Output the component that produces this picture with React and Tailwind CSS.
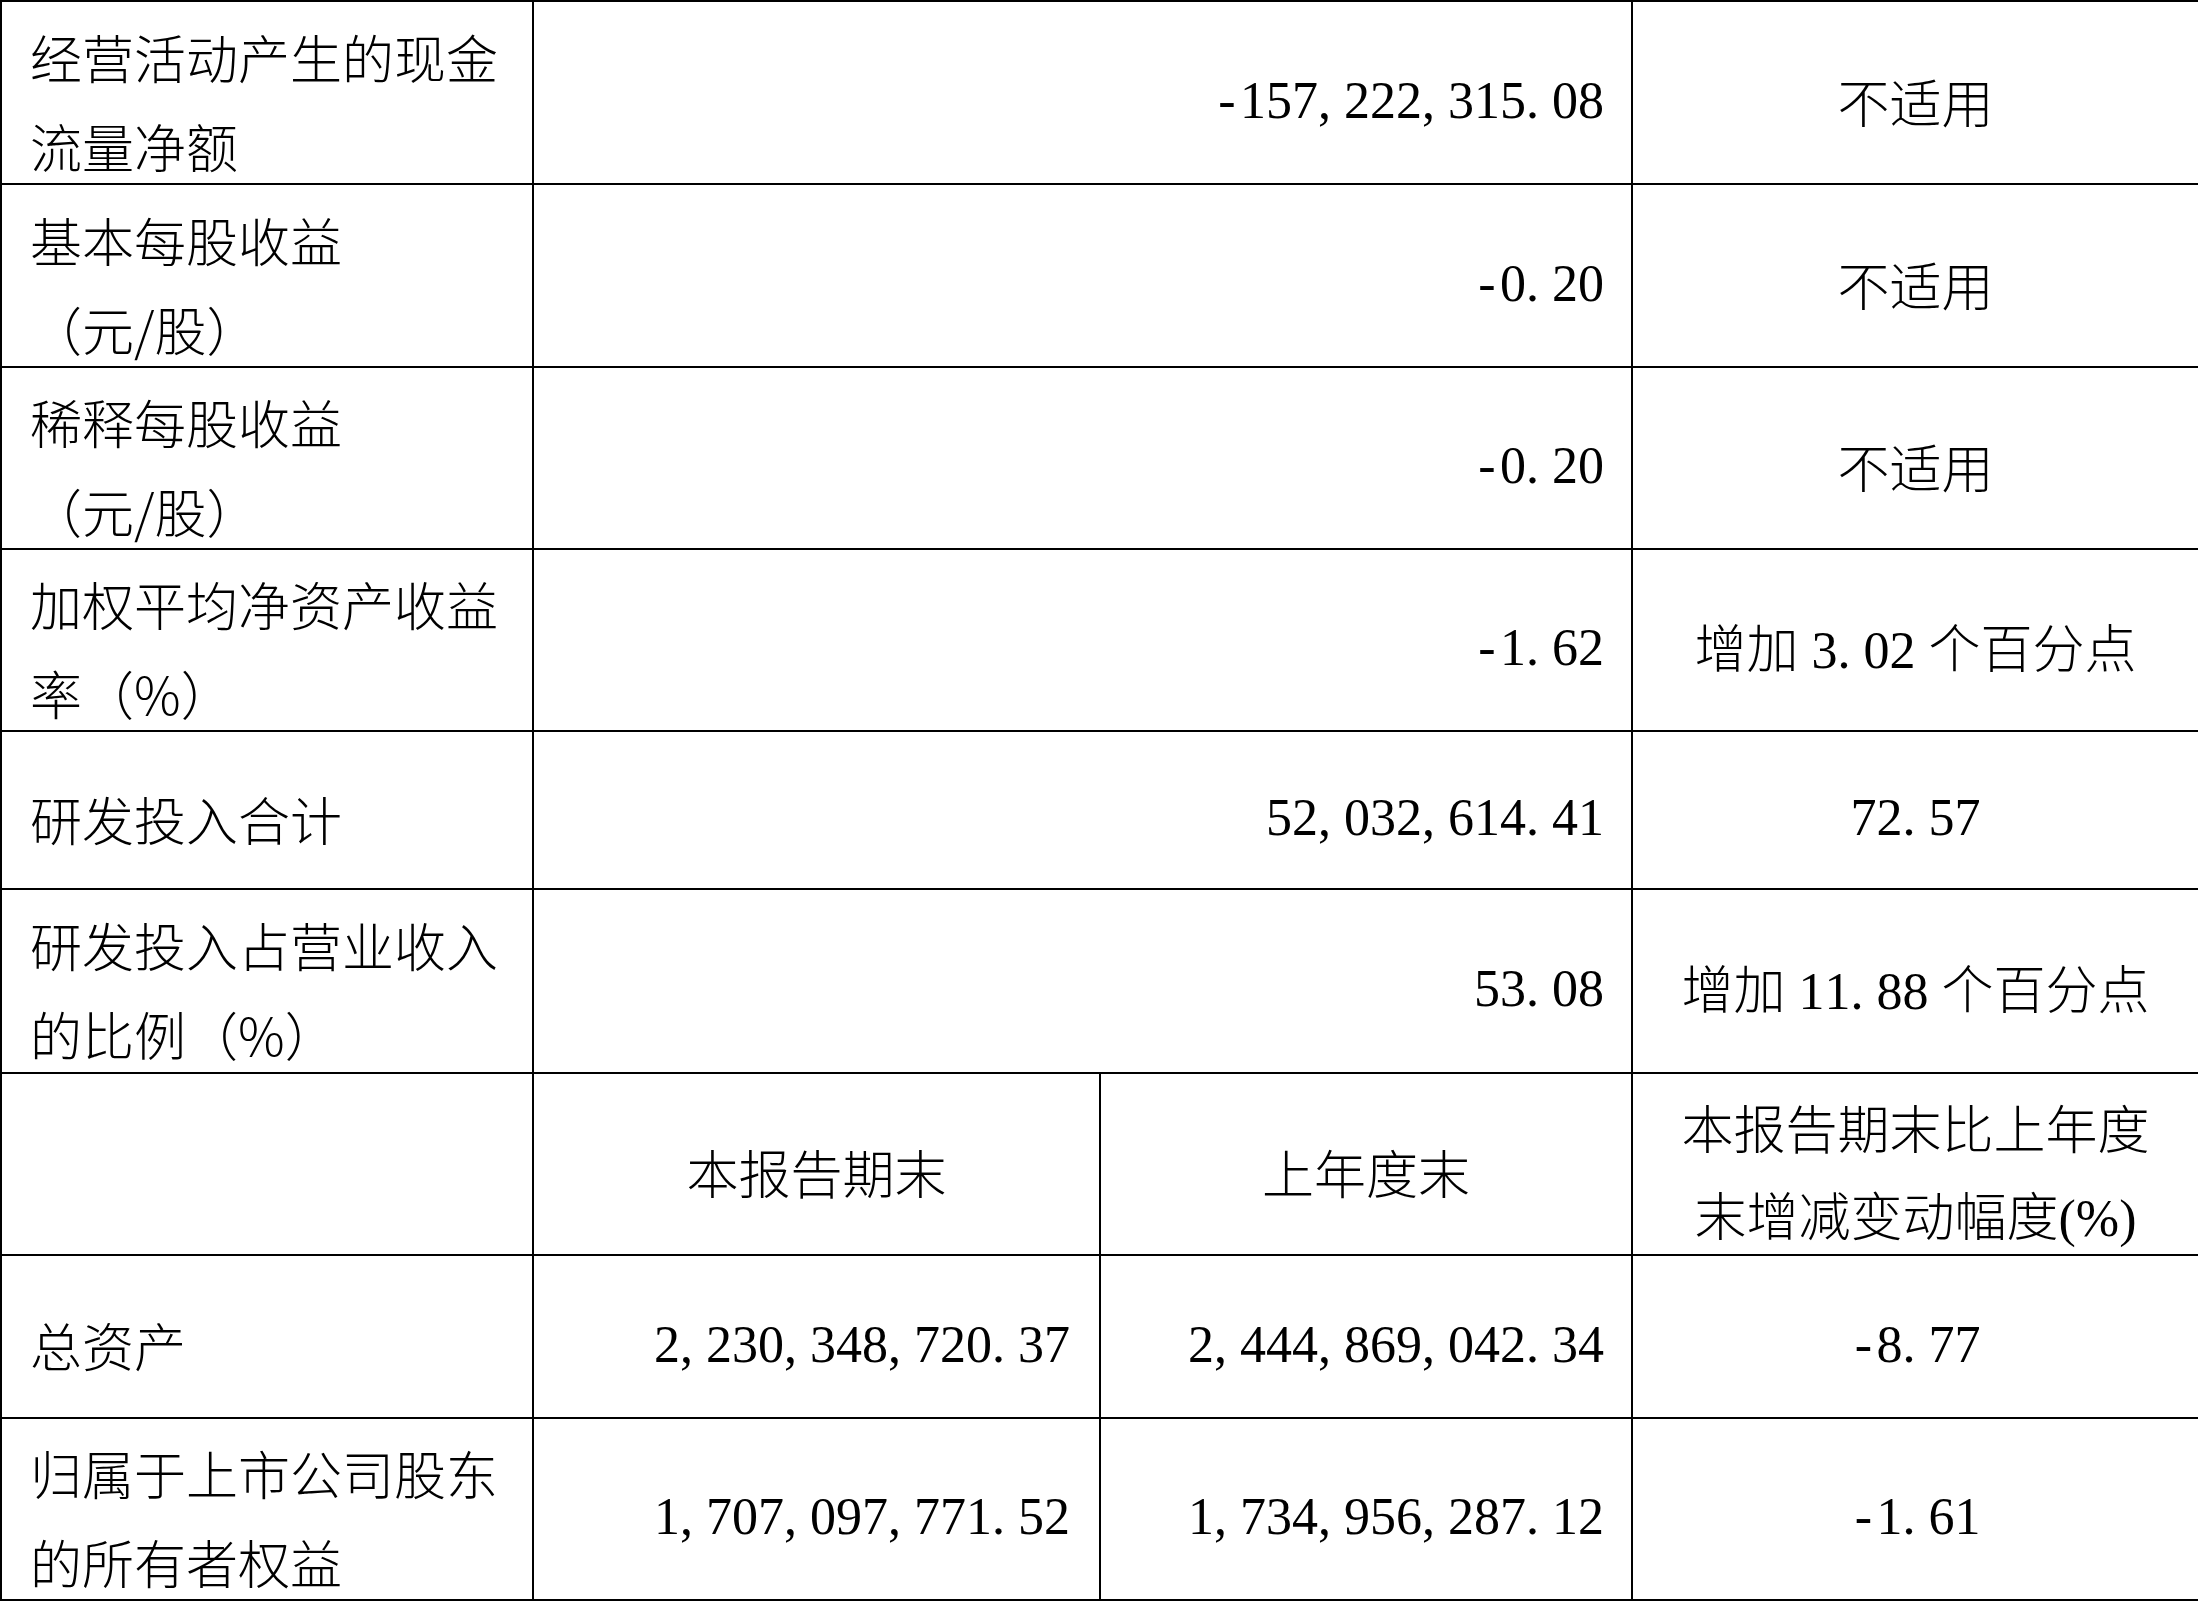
const cjk = "font-['Noto_Sans_CJK_SC',sans-serif] font-light";

// SimSun-style half-width figures: every char gets a 0.5em cell
function Num({ s }) {
  return (
    <span className="font-['Liberation_Serif',serif] whitespace-nowrap">
      {s.split('').map((c, i) => (
        <span
          key={i}
          className={
            c === ',' || c === '.'
              ? 'inline-block w-[0.5em] text-left'
              : 'inline-block w-[0.5em] text-center'
          }
        >
          {c}
        </span>
      ))}
    </span>
  );
}

function Label({ lines }) {
  return (
    <div className={`${cjk} leading-[89px]`}>
      {lines.map((l, i) => (
        <div key={i} className="whitespace-nowrap">{l}</div>
      ))}
    </div>
  );
}

const cell = 'flex items-center pt-[16px] border-r-2 border-b-2 border-black overflow-hidden';

const rows = [
  { label: ['经营活动产生的现金', '流量净额'], value: '-157,222,315.08', change: <span className={cjk}>不适用</span> },
  { label: ['基本每股收益', '（元/股）'], value: '-0.20', change: <span className={cjk}>不适用</span> },
  { label: ['稀释每股收益', '（元/股）'], value: '-0.20', change: <span className={cjk}>不适用</span> },
  {
    label: ['加权平均净资产收益', '率（%）'],
    value: '-1.62',
    change: (
      <span className={`${cjk} whitespace-nowrap`}>
        增加<span className="mx-[13px]"><Num s="3.02" /></span>个百分点
      </span>
    ),
  },
  { label: ['研发投入合计'], value: '52,032,614.41', change: <Num s="72.57" /> },
  {
    label: ['研发投入占营业收入', '的比例（%）'],
    value: '53.08',
    change: (
      <span className={`${cjk} whitespace-nowrap`}>
        增加<span className="mx-[13px]"><Num s="11.88" /></span>个百分点
      </span>
    ),
  },
];

export default function App() {
  return (
    <div className="bg-white w-[2198px] h-[1601px] text-black text-[52px]">
      <div className="grid grid-cols-[532px_567px_532px_567px] grid-rows-[183px_183px_182px_182px_158px_184px_182px_163px_182px] border-t-2 border-l-2 border-black w-[2198px]">
        {rows.map((r, i) => (
          <div key={i} className="contents">
            <div className={`${cell} pl-[28px]`}>
              <Label lines={r.label} />
            </div>
            <div className={`${cell} col-span-2 justify-end pr-[27px]`}>
              <Num s={r.value} />
            </div>
            <div className={`${cell} justify-center`}>{r.change}</div>
          </div>
        ))}

        <div className={cell} />
        <div className={`${cell} justify-center`}>
          <span className={cjk}>本报告期末</span>
        </div>
        <div className={`${cell} justify-center`}>
          <span className={cjk}>上年度末</span>
        </div>
        <div className={`${cell} justify-center`}>
          <div className={`${cjk} leading-[87px] text-center`}>
            <div>本报告期末比上年度</div>
            <div className="whitespace-nowrap">
              末增减变动幅度<span className="font-['Liberation_Serif',serif]">(%)</span>
            </div>
          </div>
        </div>

        <div className={`${cell} pl-[28px]`}>
          <Label lines={['总资产']} />
        </div>
        <div className={`${cell} justify-end pr-[29px]`}>
          <Num s="2,230,348,720.37" />
        </div>
        <div className={`${cell} justify-end pr-[27px]`}>
          <Num s="2,444,869,042.34" />
        </div>
        <div className={`${cell} justify-center`}>
          <Num s="-8.77" />
        </div>

        <div className={`${cell} pl-[28px]`}>
          <Label lines={['归属于上市公司股东', '的所有者权益']} />
        </div>
        <div className={`${cell} justify-end pr-[29px]`}>
          <Num s="1,707,097,771.52" />
        </div>
        <div className={`${cell} justify-end pr-[27px]`}>
          <Num s="1,734,956,287.12" />
        </div>
        <div className={`${cell} justify-center`}>
          <Num s="-1.61" />
        </div>
      </div>
    </div>
  );
}
